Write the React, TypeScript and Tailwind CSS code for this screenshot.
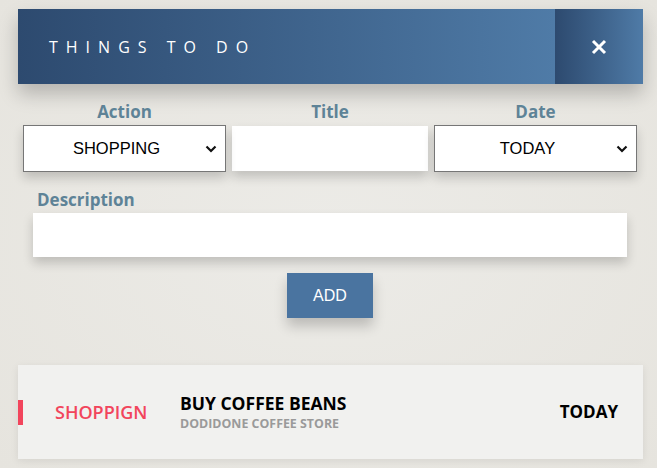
import React from "react";

function Chevron() {
  return (
    <svg width="12" height="8" viewBox="0 0 12 8" className="pointer-events-none absolute right-[8px] top-1/2 -translate-y-1/2">
      <path d="M1.5 1.5 L6 6 L10.5 1.5" fill="none" stroke="#111" strokeWidth="2.2" />
    </svg>
  );
}

export default function App() {
  return (
    <div
      className="w-[657px] h-[468px] overflow-hidden bg-[radial-gradient(ellipse_at_center,#ecebe7_0%,#e6e4de_100%)]"
      style={{ fontFamily: '"Open Sans", sans-serif' }}
    >
      <div className="pt-[9px] px-[14px] pl-[18px]">
        <div className="flex h-[75px] w-[625px] shadow-[0_10px_18px_rgba(0,0,0,0.22)]">
          <div className="flex flex-1 items-center pl-[31px] bg-gradient-to-r from-[#2d4a6f] to-[#4f7ba7]">
            <span className="text-white text-[16px] tracking-[8px] leading-none">THINGS TO DO</span>
          </div>
          <div className="flex w-[88px] items-center justify-center bg-gradient-to-r from-[#2d4a6f] to-[#4f7ba7]">
            <svg width="16" height="16" viewBox="0 0 16 16">
              <path d="M2 2 L14 14 M14 2 L2 14" stroke="#fff" strokeWidth="3" strokeLinecap="butt" />
            </svg>
          </div>
        </div>
      </div>

      <div className="mt-[16px] flex gap-[6px] pl-[23px]">
        <div className="flex w-[203px] flex-col">
          <label className="h-[25px] text-center text-[17px] font-bold leading-[24px] text-[#5e8397]">Action</label>
          <div className="relative h-[47px] border border-[#767676] bg-white shadow-[0_6px_10px_rgba(0,0,0,0.18)]">
            <select className="h-full w-full appearance-none bg-transparent pr-[16px] text-center text-[16.5px] text-black outline-none" style={{ fontFamily: '"Liberation Sans", Arial, sans-serif' }}>
              <option>SHOPPING</option>
            </select>
            <Chevron />
          </div>
        </div>
        <div className="flex w-[196px] flex-col">
          <label className="h-[25px] text-center text-[17px] font-bold leading-[24px] text-[#5e8397]">Title</label>
          <input className="mt-[1px] h-[45px] bg-white outline-none shadow-[0_6px_10px_rgba(0,0,0,0.18)]" />
        </div>
        <div className="flex w-[203px] flex-col">
          <label className="h-[25px] text-center text-[17px] font-bold leading-[24px] text-[#5e8397]">Date</label>
          <div className="relative h-[47px] border border-[#767676] bg-white shadow-[0_6px_10px_rgba(0,0,0,0.18)]">
            <select className="h-full w-full appearance-none bg-transparent pr-[16px] text-center text-[16.5px] text-black outline-none" style={{ fontFamily: '"Liberation Sans", Arial, sans-serif' }}>
              <option>TODAY</option>
            </select>
            <Chevron />
          </div>
        </div>
      </div>

      <div className="mt-[14px] pl-[33px]">
        <label className="block h-[27px] pl-[4px] text-[17px] font-bold leading-[27px] text-[#5e8397]">Description</label>
        <input className="h-[44px] w-[594px] bg-white outline-none shadow-[0_6px_10px_rgba(0,0,0,0.18)]" />
      </div>

      <div className="mt-[16px] flex w-[614px] ml-[23px] justify-center">
        <button
          className="h-[45px] w-[86px] bg-[#4a74a0] text-[16px] text-white shadow-[0_8px_12px_rgba(0,0,0,0.2)]"
          style={{ fontFamily: '"Liberation Sans", Arial, sans-serif' }}
        >
          ADD
        </button>
      </div>

      <div className="ml-[18px] mt-[47px] flex h-[94px] w-[625px] items-center bg-[#f1f1ef] shadow-[0_2px_8px_rgba(0,0,0,0.08)]">
        <div className="h-[25px] w-[5px] bg-[#f2455c]" />
        <div className="w-[157px] pl-[32px] text-[18px] font-semibold text-[#f2455c]">SHOPPIGN</div>
        <div className="flex flex-1 flex-col pb-[2px]">
          <div className="text-[17.5px] font-bold leading-[24px] text-black">BUY COFFEE BEANS</div>
          <div className="text-[12.4px] font-bold leading-[17px] text-[#9a9a9a]">DODIDONE COFFEE STORE</div>
        </div>
        <div className="pr-[25px] text-[17px] font-bold text-black">TODAY</div>
      </div>
    </div>
  );
}
